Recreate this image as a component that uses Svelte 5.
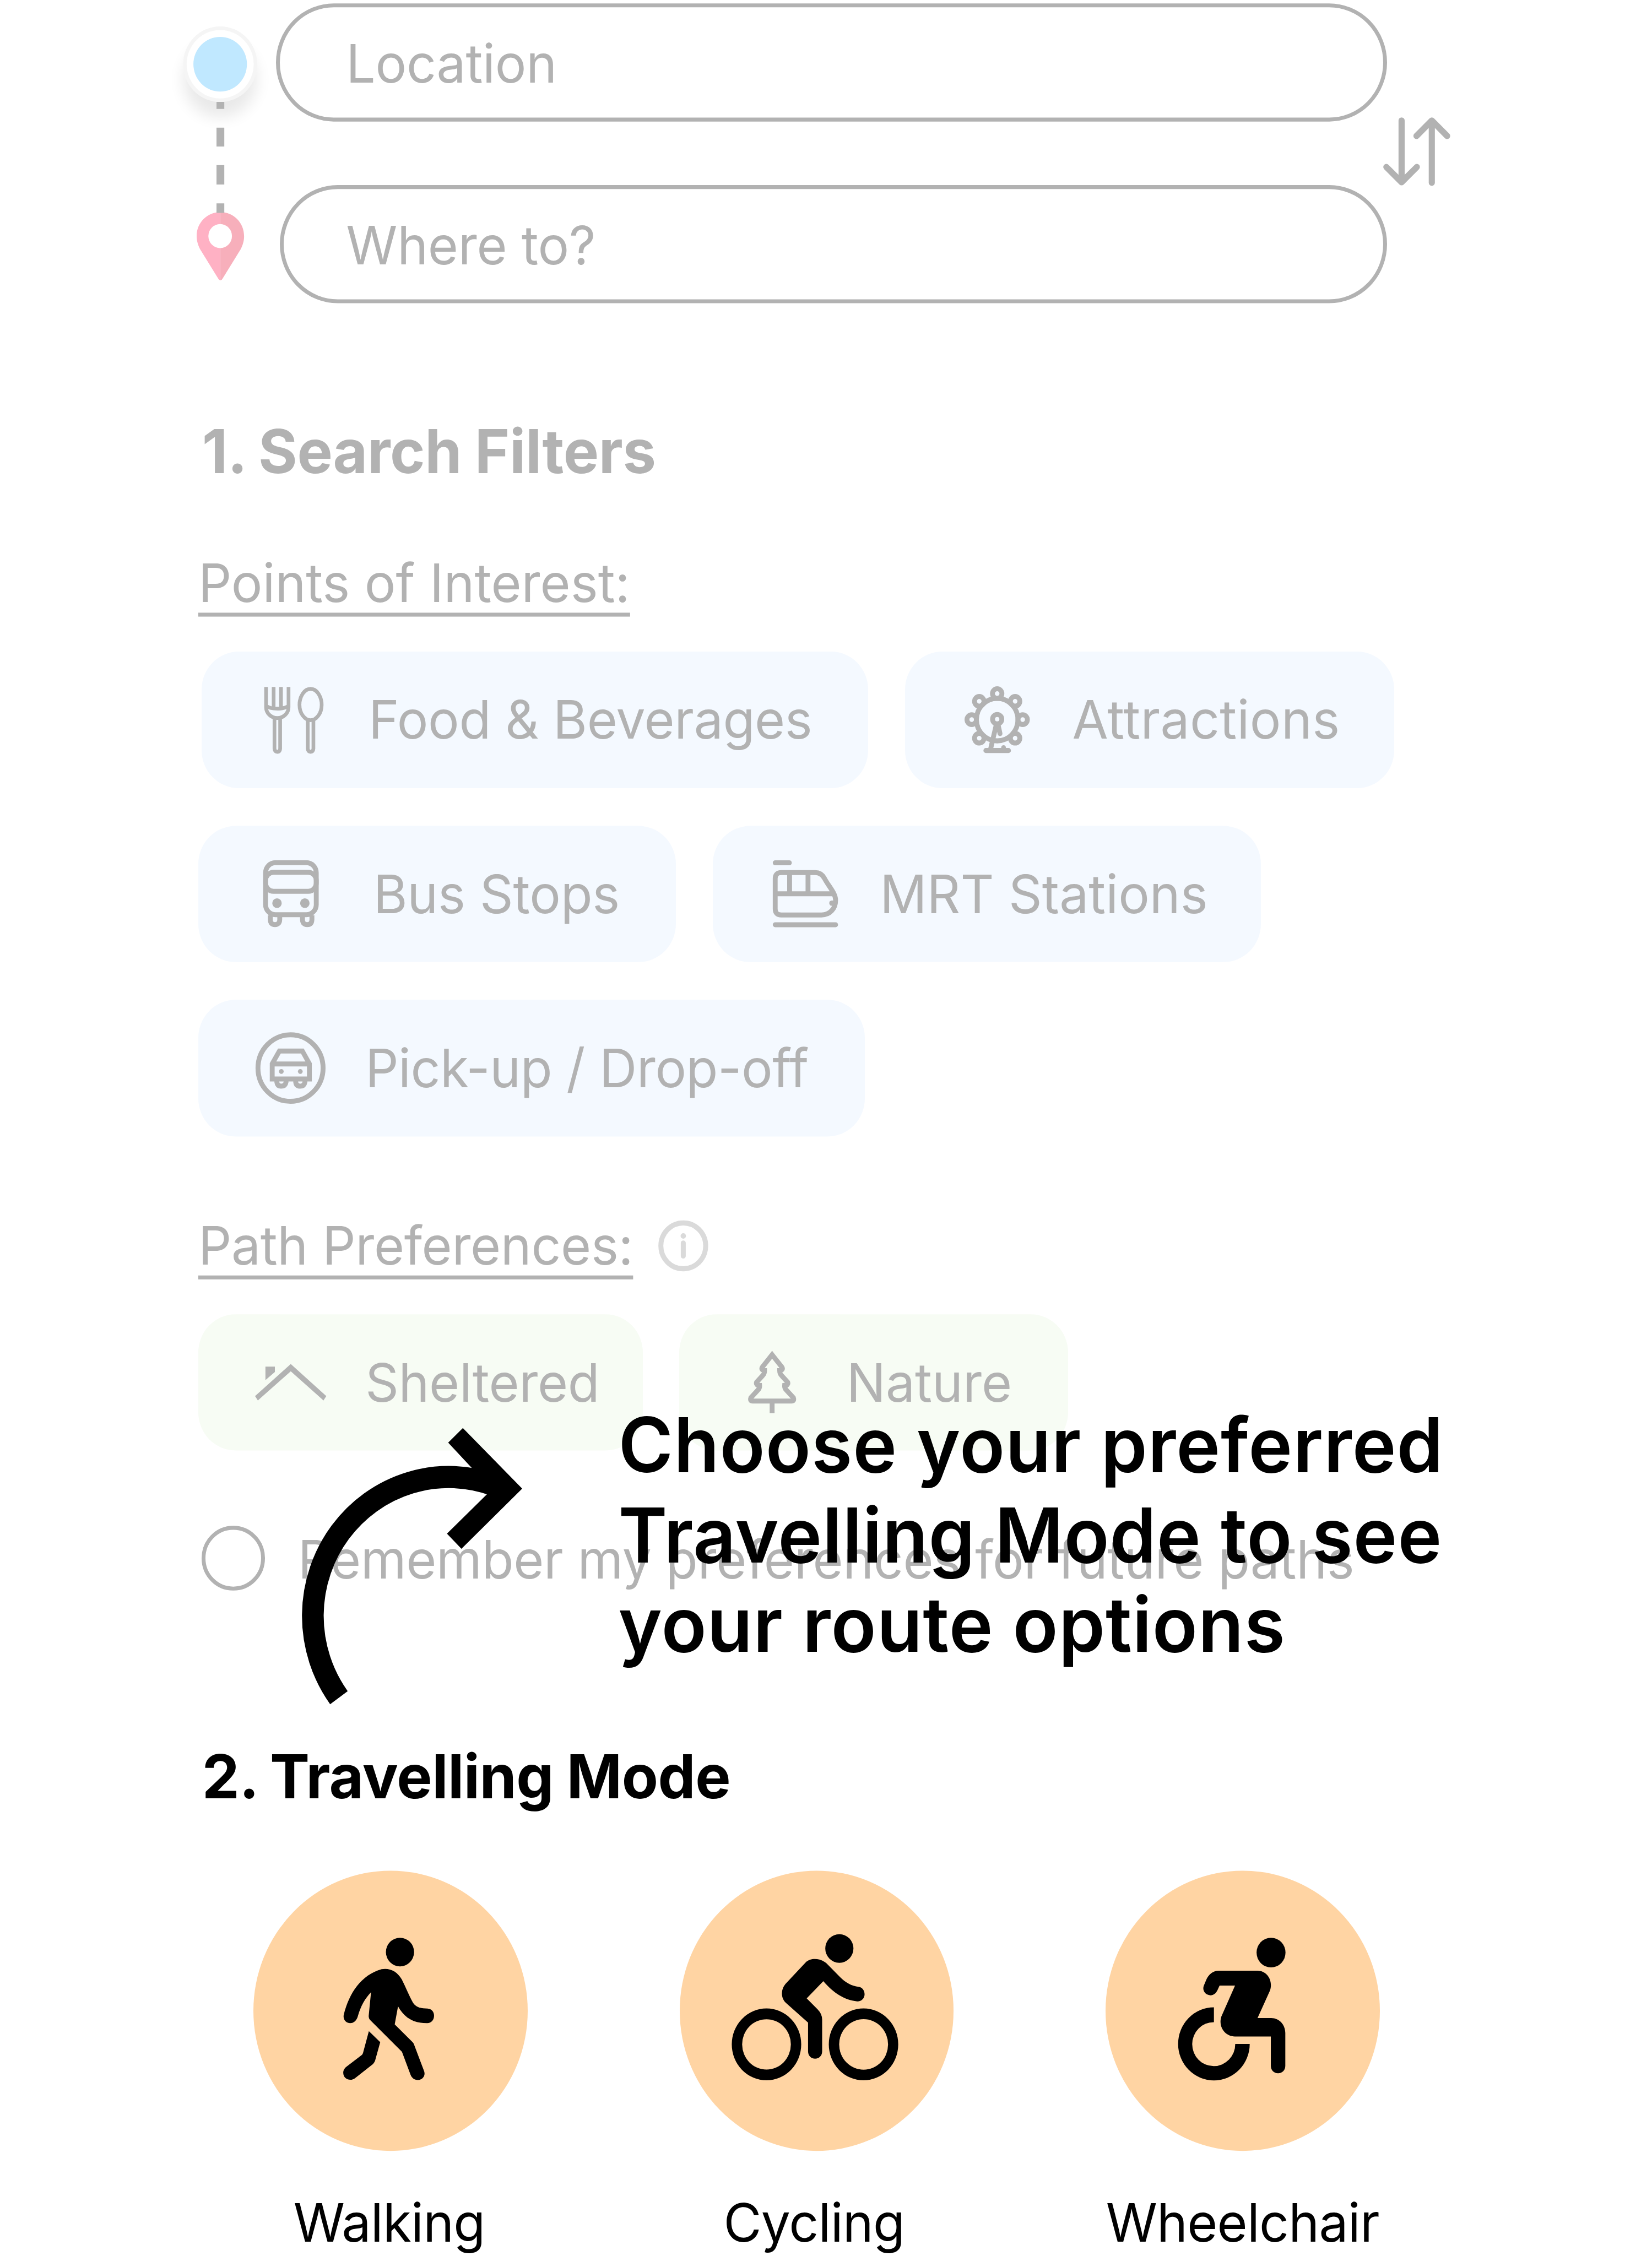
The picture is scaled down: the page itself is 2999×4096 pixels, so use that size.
<script>
  const poiRows = [
    { shifted: true, chips: [{ icon: 'food', label: 'Food & Beverages' }, { icon: 'wheel', label: 'Attractions' }] },
    { chips: [{ icon: 'bus', label: 'Bus Stops' }, { icon: 'train', label: 'MRT Stations' }] },
    { chips: [{ icon: 'car', label: 'Pick-up / Drop-off' }] }
  ];
  const pathChips = [
    { icon: 'roof', label: 'Sheltered' },
    { icon: 'tree', label: 'Nature' }
  ];
  const modes = [
    { icon: 'walk', label: 'Walking' },
    { icon: 'cycle', label: 'Cycling' },
    { icon: 'chair', label: 'Wheelchair' }
  ];
  const cabins = [[68, 15], [30, 31], [106, 31], [14, 69], [122, 69], [30, 107.5], [106, 107.5]];
</script>

{#snippet chipIcon(name)}
  {#if name === 'food'}
    <svg class="ic food" viewBox="0 0 127 139">
      <path d="M4.700 0V42C4.700 54 15 64.500 28.500 64.500S52.300 54 52.300 42V0M20.700 0V43M36.300 0V43M4.700 39C15 47 42 47 52.300 39M22.500 66V128Q23 134.500 28.500 134.500Q34 134.500 34.500 128V66" />
      <path d="M99 4C112.500 4 122.500 20 122.500 37C122.500 55 111 69 99 69C87 69 75.500 55 75.500 37C75.500 20 85.500 4 99 4ZM93 69V128Q93.500 134.500 99 134.500Q104.500 134.500 105 128V69" />
    </svg>
  {:else if name === 'wheel'}
    <svg class="ic wheel" viewBox="0 0 137 139">
      <circle cx="68" cy="69" r="44" />
      {#each cabins as [cx, cy]}
        <circle {cx} {cy} r="10" />
      {/each}
      <circle cx="68" cy="68" r="9.800" />
      <path d="M66 80L54 130M70 80L74 98M44 133H92" stroke-linecap="round" />
      <circle class="dot" cx="81.500" cy="127" r="5" />
    </svg>
  {:else if name === 'bus'}
    <svg class="ic bus" viewBox="0 0 117 139">
      <rect x="4.800" y="5" width="107.400" height="108" rx="21" />
      <rect x="4.800" y="25" width="107.400" height="39.500" rx="17" />
      <path d="M14.800 114V123Q15 133.500 24.600 133.500Q34.500 133.500 34.800 123V114M83 114V123Q83.200 133.500 93 133.500Q102.600 133.500 103 123V114" />
      <circle class="dot" cx="29" cy="89" r="10" />
      <circle class="dot" cx="88" cy="89" r="10" />
    </svg>
  {:else if name === 'train'}
    <svg class="ic train" viewBox="0 0 138 139">
      <path d="M5 5.300H35M5 133.700H133" stroke-linecap="round" />
      <path d="M18 25.500H90C100 25.500 105 30 109 37C118 54 133 68 133 83C133 100 121 113.500 103 113.500H18Q5 113.500 5 101V38Q5 25.500 18 25.500ZM5 69.500H127M35.500 26V69M74.500 26V69" />
      <path d="M133 83.500H125A5.500 5.500 0 0 0 125 94.500H130" class="dot" />
    </svg>
  {:else if name === 'car'}
    <svg class="ic car" viewBox="0 0 148 148">
      <circle cx="74" cy="74" r="69" />
      <path d="M35.200 96.500V65L50.500 38.500H99L114 65V96.500ZM35 65.500H114M45 99V103Q46 111.500 54.500 111.500Q63 111.500 64.500 103V99M85 99V103Q86 111.500 94.700 111.500Q103 111.500 104.500 103V99" />
      <circle class="dot" cx="54.500" cy="81" r="5" />
      <circle class="dot" cx="94.700" cy="81" r="5" />
    </svg>
  {:else if name === 'roof'}
    <svg class="ic roof" viewBox="0 0 151 76">
      <path class="dot" d="M75.700 .5L151 67L145 76L75.700 15.500L6 76L0 67ZM22 6H42V17L22 34Z" />
    </svg>
  {:else}
    <svg class="ic tree" viewBox="0 0 102 128">
      <path d="M51 7L72 33Q75 39 67 39.500Q67 46 71 50L84 64Q86 70 77.500 70.500Q77 76 81 80L96 96Q98.500 103 92 103H10Q3.500 103 6 96L21 80Q25 76 24.500 70.500Q16 70 18 64L31 50Q35 46 35 39.500Q27 39 30 33ZM51 103V128" />
    </svg>
  {/if}
{/snippet}

{#snippet chip(item, tone)}
  <div class="chip {tone} {item.icon}-chip">
    <div class="slot">{@render chipIcon(item.icon)}</div>
    <span>{item.label}</span>
  </div>
{/snippet}

{#snippet modeIcon(name)}
  {#if name === 'walk'}
    <svg class="disc-icon" viewBox="90 62 1401 1095" preserveAspectRatio="none">
      <ellipse cx="839" cy="380" rx="72" ry="56" />
      <path d="M691 537C660 562 638 592 624 630C618 648 602 658 585 658C562 658 546 642 552 624C580 540 640 470 745 447C785 441 825 455 848 487C870 520 885 550 904 576C918 593 935 600 980 601C1000 602 1013 613 1013 629C1013 646 998 658 978 658C905 658 860 635 829 592L812 663L904 733Q909 737 911 742L961 843C972 862 955 880 930 880C912 880 900 873 893 860L849 770L687 646Q679 640 679 630Z" />
      <path d="M680 689L738 732L712 804Q709 812 701 818L609 873C588 886 549 878 549 851C549 843 554 836 562 830L643 783Q648 780 650 775Z" />
    </svg>
  {:else if name === 'cycle'}
    <svg class="disc-icon" viewBox="95 62 1402 1095" preserveAspectRatio="none">
      <ellipse cx="911" cy="366" rx="72" ry="56" />
      <path d="M742 418C765 402 815 403 845 424L915 478C940 498 975 513 1009 516C1028 518 1040 530 1040 545C1040 562 1022 574 1002 573C930 567 875 535 829 494L744 561L800 604Q823 622 823 644V768C823 786 807 797 787 797C767 797 751 786 751 768V656L638 579C612 560 610 528 635 505Z" />
      <path fill-rule="evenodd" d="M361 741A177 140 0 1 1 716 741A177 140 0 1 1 361 741ZM414 741A124 98 0 1 0 663 741A124 98 0 1 0 414 741ZM857 741A177 140 0 1 1 1212 741A177 140 0 1 1 857 741ZM910 741A124 98 0 1 0 1160 741A124 98 0 1 0 910 741Z" />
    </svg>
  {:else}
    <svg class="disc-icon" viewBox="101 62 1402 1095" preserveAspectRatio="none">
      <ellipse cx="947" cy="382" rx="74" ry="58" />
      <path d="M680 453H876C928 453 958 492 942 530L878 638H948C990 638 1020 665 1020 696V825C1020 842 1004 854 983 854C962 854 946 842 946 825V710H762C712 710 676 672 693 632L763 511H684L672 531C664 542 653 549 638 549C613 549 594 532 603 512L615 490C627 468 650 453 680 453Z" />
      <path d="M655 596V654A110 86 0 1 0 764 739H838A183 143 0 1 1 655 596Z" />
    </svg>
  {/if}
{/snippet}

<main>
  <header>
    <svg class="rail" viewBox="370 0 215 630">
      <defs>
        <filter id="soft" x="-50%" y="-50%" width="200%" height="200%"><feGaussianBlur stdDeviation="16" /></filter>
      </defs>
      <circle cx="466.500" cy="165" r="78" fill="#000" opacity=".085" filter="url(#soft)" />
      <circle cx="466.500" cy="133.200" r="78.500" fill="#f5f5f5" />
      <circle cx="466.500" cy="133.200" r="71" fill="#fff" />
      <circle cx="466.500" cy="133.200" r="56.700" fill="#c0e8ff" />
      <path fill="#ffb1c4" d="M467 440C439 440 416.700 462 416.700 490C416.700 500 420 509 424 517L462.500 578Q464.500 581.600 467 581.600Z" />
      <path fill="#f7afbb" d="M467 440C495 440 517.200 462 517.200 490C517.200 500 514 509 510 517L471.500 578Q469.500 581.600 467 581.600Z" />
      <circle cx="466.500" cy="489.700" r="25" fill="#fff" />
      <path stroke="#b2b2b2" stroke-width="16.500" d="M467 211.400V225.800M467 264.900V304M467 342.600V382.800M467 422V441.500" />
    </svg>
    <div class="fields">
      <div class="field">Location</div>
      <div class="field second">Where to?</div>
    </div>
    <svg class="swap" viewBox="2930 0 142 630">
      <path d="M2969 250V378M2936.700 346.500L2969 378L3001.300 346.500M3033 379V250M3000.500 282L3033 250L3065.500 282" />
    </svg>
  </header>

  <h2>1. Search Filters</h2>

  <h3 class="poi"><u>Points of Interest:</u></h3>
  <div class="rows">
    {#each poiRows as row}
      <div class="row" class:shifted={row.shifted}>
        {#each row.chips as item}{@render chip(item, 'blue')}{/each}
      </div>
    {/each}
  </div>

  <h3 class="paths">
    <u>Path Preferences:</u>
    <svg class="info" viewBox="0 0 106 106">
      <circle cx="53" cy="53" r="47.500" />
      <path d="M53 47V74" />
      <circle class="pt" cx="53" cy="32.500" r="5.700" />
    </svg>
  </h3>
  <div class="row green-row">
    {#each pathChips as item}{@render chip(item, 'green')}{/each}
  </div>

  <div class="remember">
    <i></i>
    <span>Remember my preferences for future paths</span>
  </div>

  <h2 class="travel">2. Travelling Mode</h2>
  <div class="modes">
    {#each modes as mode}
      <div class="mode">
        <div class="disc">{@render modeIcon(mode.icon)}</div>
        <span class={mode.icon}>{mode.label}</span>
      </div>
    {/each}
  </div>

  <aside class="coach">
    <svg class="arrow" viewBox="636 2958 474 580">
      <path fill="none" stroke="#000" stroke-width="46" d="M718 3521A288 288 0 0 1 1050 3081" />
      <path d="M980.600 2961.600L1106.300 3087.500L977.600 3212.200L946.900 3180.800L1042 3089L949.500 2992Z" />
    </svg>
    <p>Choose your preferred<br />Travelling Mode to see<br />your route options</p>
  </aside>
</main>

<style>
  :global(html) {
    font-size: 85.686px;
  }
  :global(body) {
    min-height: 4096px;
    background: #fff;
  }
  main {
    position: relative;
    box-sizing: border-box;
    width: 35rem;
    height: 46.79rem;
    padding: 0.068rem 0 0 4.2rem;
    overflow: hidden;
    transform: scaleY(1.0215);
    transform-origin: 0 0;
    font-family: Inter, 'Liberation Sans', sans-serif;
    font-size: 1.104rem;
    line-height: 1.21;
    color: #b2b2b2;
  }
  svg {
    display: block;
    overflow: visible;
    flex: none;
  }
  header {
    display: flex;
    height: 6.232rem;
    margin-left: -0.5rem;
  }
  .rail {
    width: 2.15rem;
    height: 6.3rem;
    margin-top: -0.068rem;
  }
  .fields {
    display: flex;
    flex-direction: column;
    gap: 1.325rem;
    width: 23.54rem;
  }
  .field {
    box-sizing: border-box;
    height: 2.449rem;
    padding: 0.06rem 0 0 1.4rem;
    display: flex;
    align-items: center;
    border: 0.0825rem solid #b2b2b2;
    border-radius: 1.3rem;
    letter-spacing: -0.003rem;
  }
  .second {
    margin-left: 0.08rem;
    padding-left: 1.32rem;
  }
  .swap {
    width: 1.42rem;
    height: 6.3rem;
    margin: -0.068rem 0 0 -0.09rem;
    fill: none;
    stroke: #b2b2b2;
    stroke-width: 13;
    stroke-linecap: round;
    stroke-linejoin: round;
  }
  h2 {
    margin: 2.296rem 0 0 0.08rem;
    font-size: 1.262rem;
    font-weight: 700;
    line-height: 1.21;
    letter-spacing: -0.004rem;
    word-spacing: -0.02rem;
  }
  h3 {
    display: flex;
    margin: 0;
    font-size: 1.104rem;
    font-weight: 400;
  }
  u {
    text-decoration-thickness: 0.08rem;
    text-underline-offset: 0.216rem;
    text-decoration-skip-ink: none;
  }
  .poi {
    margin-top: 1.305rem;
  }
  .paths {
    margin-top: 1.6rem;
    letter-spacing: -0.004rem;
  }
  .info {
    width: 1.06rem;
    height: 1.06rem;
    margin: 0.145rem 0 0 0.53rem;
    fill: none;
    stroke: #dadada;
    stroke-width: 10.5;
    stroke-linecap: round;
  }
  .info .pt {
    fill: #dadada;
    stroke: none;
  }
  .rows {
    display: flex;
    flex-direction: column;
    gap: 0.784rem;
    margin-top: 0.752rem;
  }
  .row {
    display: flex;
    gap: 0.78rem;
  }
  .shifted {
    margin-left: 0.068rem;
  }
  .green-row {
    margin-top: 0.749rem;
  }
  .chip {
    box-sizing: border-box;
    display: flex;
    align-items: center;
    gap: 0.83rem;
    height: 2.83rem;
    padding-left: 1.21rem;
    border-radius: 0.79rem;
    white-space: nowrap;
  }
  .food-chip {
    width: 14.13rem;
    letter-spacing: -0.004rem;
  }
  .wheel-chip {
    width: 10.36rem;
    letter-spacing: 0.004rem;
  }
  .bus-chip {
    width: 10.12rem;
    gap: 1rem;
    letter-spacing: -0.003rem;
  }
  .train-chip {
    width: 11.615rem;
  }
  .car-chip {
    width: 14.12rem;
    letter-spacing: -0.0055rem;
  }
  .roof-chip {
    width: 9.415rem;
    letter-spacing: -0.004rem;
  }
  .tree-chip {
    width: 8.24rem;
  }
  .blue {
    background: #f4f9ff;
  }
  .green {
    background: #f7fcf4;
  }
  .slot {
    display: flex;
    justify-content: center;
    width: 1.5rem;
  }
  .ic {
    fill: none;
    stroke: #b2b2b2;
    stroke-width: 10.3;
  }
  .ic .dot {
    fill: #b2b2b2;
    stroke: none;
  }
  .food {
    width: 1.27rem;
    height: 1.39rem;
    margin-top: 0.02rem;
    stroke-width: 7.8;
  }
  .wheel {
    width: 1.37rem;
    height: 1.39rem;
  }
  .bus {
    width: 1.17rem;
    height: 1.39rem;
  }
  .train {
    width: 1.38rem;
    height: 1.39rem;
  }
  .car {
    width: 1.48rem;
    height: 1.48rem;
  }
  .roof {
    width: 1.51rem;
    height: 0.76rem;
  }
  .tree {
    width: 1.02rem;
    height: 1.28rem;
  }
  .remember {
    display: flex;
    margin: 1.563rem 0 0 0.075rem;
    white-space: nowrap;
  }
  .remember i {
    box-sizing: border-box;
    width: 1.337rem;
    height: 1.337rem;
    margin-right: 0.7rem;
    border: 0.0825rem solid #b2b2b2;
    border-radius: 50%;
  }
  .remember span {
    height: 1.3rem;
    padding-top: 0.04rem;
    letter-spacing: -0.0038rem;
  }
  .travel {
    margin-top: 3.099rem;
    letter-spacing: -0.006rem;
    color: #000;
  }
  .modes {
    display: flex;
    gap: 3.214rem;
    margin: 1.189rem 0 0 1.173rem;
    color: #000;
  }
  .mode {
    display: flex;
    flex-direction: column;
    align-items: center;
    gap: 0.815rem;
    width: 5.81rem;
    letter-spacing: -0.009rem;
    white-space: nowrap;
  }
  .mode .walk {
    margin-right: 0.06rem;
  }
  .mode .cycle {
    margin-right: 0.11rem;
  }
  .disc {
    width: 5.81rem;
    height: 5.81rem;
    border-radius: 50%;
    background: #ffd4a3;
  }
  .disc-icon {
    width: 100%;
    height: 100%;
  }
  .coach {
    position: absolute;
    left: 6.36rem;
    top: 29.58rem;
    display: flex;
    color: #000;
  }
  .arrow {
    width: 4.74rem;
    height: 5.8rem;
  }
  .coach p {
    margin: -0.53rem 0 0 2rem;
    font-size: 1.577rem;
    font-weight: 600;
    line-height: 1.862rem;
    letter-spacing: 0.011rem;
    white-space: nowrap;
  }
</style>
